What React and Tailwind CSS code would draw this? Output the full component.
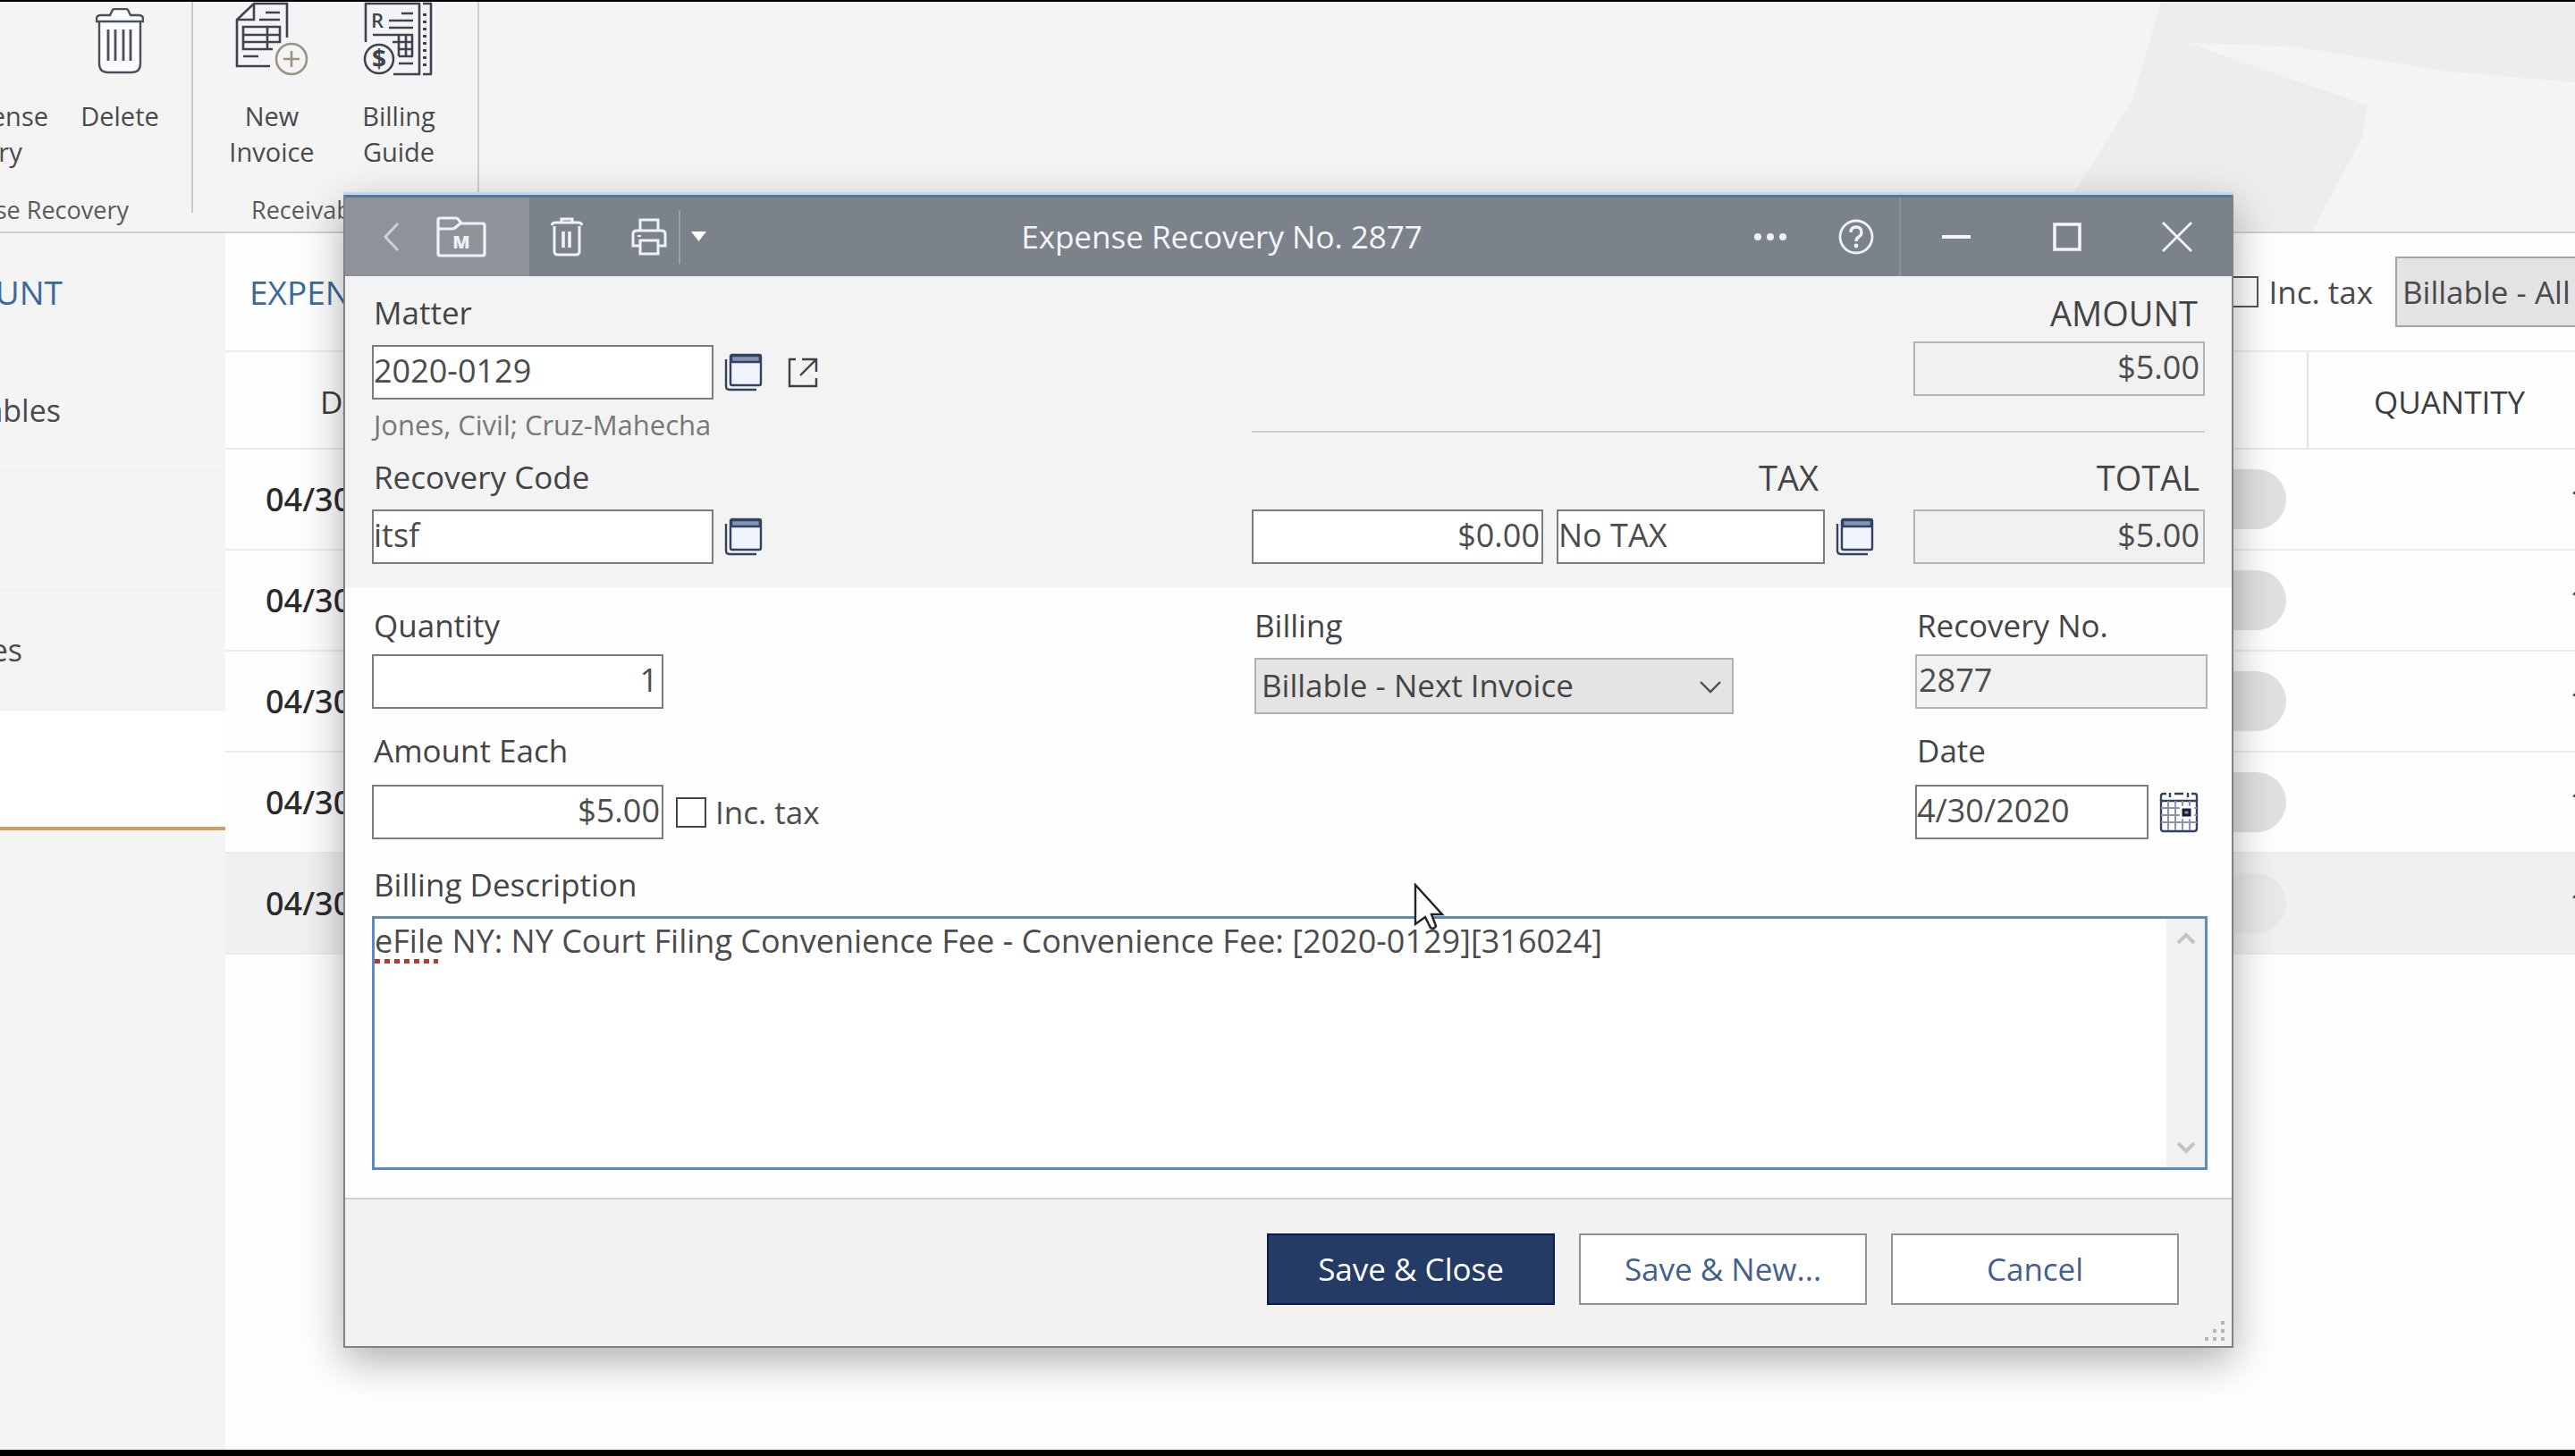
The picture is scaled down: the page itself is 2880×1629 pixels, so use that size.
import { useState } from "react";

// === Ribbon icons ===
function TrashLargeIcon() {
  return (
    <svg width="54" height="74" viewBox="0 0 54 74" fill="#fbfcff" stroke="#4a4f5a" strokeWidth="2.4">
      <path d="M4 15v47q0 10 10 10h26q10 0 10-10V15" />
      <path d="M1 15V12q0-4 5-4h10l3-6q1-1 2-1h13q1 0 2 1l3 6h9q5 0 5 4v3z" />
      <path d="M14 24v35M22 24v35M31 24v35M39 24v35" strokeWidth="2.8" />
    </svg>
  );
}

function NewInvoiceIcon() {
  return (
    <svg width="82" height="84" viewBox="0 0 82 84" fill="none" stroke="#3d4350" strokeWidth="2.6">
      <path d="M39 72H2V20L21 2h37v38" />
      <path d="M21 2v18H2" />
      <path d="M34 12h16M27 20h23M9 61h17" />
      <path d="M9 28h41v17H9zM9 37h41M36 28v25M9 45v8h33" />
      <circle cx="63" cy="64" r="17" stroke="#9b9484" />
      <path d="M54 64h18M63 55v18" stroke="#9b9484" />
    </svg>
  );
}

function BillingGuideIcon() {
  return (
    <svg width="80" height="84" viewBox="0 0 80 84" fill="none" stroke="#3d4350" strokeWidth="2.6">
      <path d="M3 45V2h60v79H34" />
      <path d="M67 2h10M76 2v79M67 81h10" />
      <path d="M69 13v64" strokeDasharray="3 5" strokeWidth="4" />
      <path d="M43 13h13M29 21h27M29 29h27M11 37h45M33 45h23M40 53h16M40 61h16M40 69h16" />
      <path d="M40 37v24M48 37v24M55 37v24" />
      <circle cx="18" cy="64" r="16" />
      <text x="9" y="29" fontFamily="Open Sans, sans-serif" fontSize="22" fontWeight="600" fill="#3d4350" stroke="none">R</text>
      <text x="18" y="74" textAnchor="middle" fontFamily="Open Sans, sans-serif" fontSize="28" fontWeight="700" fill="#3d4350" stroke="none">$</text>
    </svg>
  );
}

// === Title bar icons ===
function BackIcon() {
  return (
    <svg width="20" height="34" viewBox="0 0 20 34" fill="none" stroke="#cdd0d4" strokeWidth="3">
      <path d="M17 2L3 17l14 15" />
    </svg>
  );
}

function MatterFolderIcon() {
  return (
    <svg width="56" height="46" viewBox="0 0 56 46" fill="none" stroke="#eef1f6" strokeWidth="3.2" strokeLinejoin="round">
      <path d="M2 14V4q0-2 2-2h18q2 0 3 2l3 4h24q2 0 2 2v32q0 2-2 2H4q-2 0-2-2z" />
      <path d="M2 14h16q3 0 5-3l4-3" />
      <text x="28" y="36" textAnchor="middle" fontFamily="Open Sans, sans-serif" fontSize="20" fontWeight="800" fill="#eef1f6" stroke="none">M</text>
    </svg>
  );
}

function TrashIcon() {
  return (
    <svg width="36" height="44" viewBox="0 0 36 44" fill="none" stroke="#eef1f6" strokeWidth="3">
      <path d="M4 10v28q0 4 4 4h20q4 0 4-4V10" />
      <path d="M1 9q1-3 4-3h26q3 0 4 3M12 6V2h12v4" />
      <path d="M14 16v18M21 16v18" strokeWidth="3.6" />
    </svg>
  );
}

function PrinterIcon() {
  return (
    <svg width="40" height="42" viewBox="0 0 40 42" fill="none" stroke="#eef1f6" strokeWidth="3">
      <path d="M10 14V2h20v12" />
      <path d="M10 31H2V18q0-4 4-4h28q4 0 4 4v13h-8" />
      <path d="M10 25h20v15H10z" />
      <path d="M7 20h4" strokeWidth="2" />
    </svg>
  );
}

function HelpIcon() {
  return (
    <svg width="40" height="40" viewBox="0 0 40 40" fill="none" stroke="#eef1f6" strokeWidth="2.8">
      <circle cx="20" cy="20" r="18" />
      <path d="M14 15q0-6 6-6t6 6q0 3-3 5t-3 5" strokeWidth="3.4" />
      <circle cx="20" cy="30" r="2.4" fill="#eef1f6" stroke="none" />
    </svg>
  );
}

// === Field icons ===
function LookupIcon() {
  return (
    <svg width="43" height="43" viewBox="0 0 43 43" fill="none" stroke="#33425f" strokeWidth="2.4">
      <path d="M2 7v30q0 4 4 4h30" />
      <rect x="7" y="2" width="34" height="34" rx="2" fill="#eff4fd" />
      <path d="M8 3h32v7H8z" fill="#8494b3" strokeWidth="2.6" />
    </svg>
  );
}

function OpenIcon() {
  return (
    <svg width="34" height="34" viewBox="0 0 34 34" fill="none" stroke="#3c4048" strokeWidth="2.4">
      <path d="M9 2H2v30h30v-9" />
      <path d="M16 2h16v14M32 2L14 20" />
    </svg>
  );
}

function CalendarIcon() {
  return (
    <svg width="44" height="46" viewBox="0 0 44 46" fill="none" stroke="#33425f" strokeWidth="2.4">
      <path d="M2 10V4q0-2 3-2h3M17 2h10M36 2h3q3 0 3 2v6M12 1v5M32 1v5" />
      <path d="M2 10h40v31q0 3-3 3H5q-3 0-3-3z" />
      <path d="M2 18h40M2 26h40M2 34h40M10 10v33M18 10v33M26 10v33M34 10v33" stroke="#8b94aa" strokeWidth="2" />
      <path d="M24 17h14v12H24z" fill="#fff" stroke="#fff" />
      <path d="M27 20h7v6h-7z" fill="#8494b3" stroke="#141d33" strokeWidth="3" />
    </svg>
  );
}

function Chevron({ up = false, color = "#c4c4c6" }) {
  return (
    <svg width="22" height="16" viewBox="0 0 22 16" fill="none" stroke={color} strokeWidth="4">
      <path d={up ? "M2 13l9-9 9 9" : "M2 3l9 9 9-9"} />
    </svg>
  );
}

// === Background window ===
function RibbonButton({ label, className, children }) {
  return (
    <button className={"flex flex-col text-[29px] leading-10 text-[#4a4a4c] " + className}>
      <span className="flex h-[108px] items-start">{children}</span>
      <span className="whitespace-pre-line">{label}</span>
    </button>
  );
}

function Ribbon() {
  return (
    <div className="relative flex h-[259px] shrink-0 overflow-hidden border-b-2 border-[#cfcfcf] bg-[#f4f4f4]">
      <svg className="absolute right-0 top-0" width="580" height="257" viewBox="0 0 580 257" fill="#ededed">
        <path d="M117 0h463v90l-140-12-176-28-117-4 86 30 115 40-6 36-56 105H-8L85 110z" />
      </svg>
      <div className="relative h-[236px] w-[216px] border-r-2 border-[#c9c9c9]">
        <div className="flex items-start">
          <div className="flex w-[54px] justify-end">
            <RibbonButton label={"New Expense\nRecovery"} className="shrink-0 items-center" />
          </div>
          <RibbonButton label="Delete" className="w-[160px] items-center">
            <span className="pt-[7px]"><TrashLargeIcon /></span>
          </RibbonButton>
        </div>
        <div className="absolute left-0 top-[214px] flex w-[144px] justify-end">
          <span className="whitespace-nowrap text-[27px] leading-[38px] text-[#5a5a5c]">Expense Recovery</span>
        </div>
      </div>
      <div className="relative flex w-[320px] flex-col border-r-2 border-[#cfcfcf] px-[17px]">
        <div className="flex">
          <RibbonButton label={"New\nInvoice"} className="w-[142px] items-center"><NewInvoiceIcon /></RibbonButton>
          <RibbonButton label={"Billing\nGuide"} className="w-[142px] items-center"><BillingGuideIcon /></RibbonButton>
        </div>
        <span className="mt-[26px] pl-[48px] text-[27px] leading-[38px] text-[#5a5a5c]">Receivables</span>
      </div>
    </div>
  );
}

function NavItem({ label, width, active }) {
  return (
    <a href="#" className={"flex h-[134px] items-center border-b-2 text-[34px] leading-[46px] text-[#4a4a4c] " + (active ? "border-b-4 border-[#d59b5e] bg-white" : "border-[#efeff1]")}>
      <span className={"flex justify-end whitespace-nowrap " + width}>{label}</span>
    </a>
  );
}

function Sidebar() {
  return (
    <nav className="w-[252px] shrink-0 overflow-hidden bg-[#f4f4f5]">
      <h2 className="flex h-[132px] w-[70px] items-center justify-end text-[37px] leading-[50px] text-[#3a6a9c]">ACCOUNT</h2>
      <NavItem label="Receivables" width="w-[68px]" />
      <NavItem label="" width="w-0" />
      <NavItem label="Expenses" width="w-[25px]" />
      <NavItem label="" width="w-0" active />
    </nav>
  );
}

const ROWS = [1, 2, 3, 4, 5].map(id => ({ id, date: "04/30/2020", quantity: "1.00", selected: id === 5 }));

function ExpenseList() {
  return (
    <main className="min-w-0 flex-1 overflow-hidden bg-[#fefefe]">
      <div className="flex h-[133px] items-center border-b-2 border-[#ebebed] pl-[27px] text-[35px] leading-[48px] text-[#4a4a4c]">
        <h2 className="text-[37px] text-[#3a6a9c]">EXPENSE RECOVERY</h2>
        <label className="ml-auto flex items-center gap-[11px]">
          <input type="checkbox" className="size-[35px] appearance-none border-2 border-[#555] bg-white" />
          Inc. tax
        </label>
        <select aria-label="Billing filter" className="ml-[25px] h-[79px] w-[201px] appearance-none border-2 border-r-0 border-[#a5a5a7] bg-[#e3e3e3] pl-[6px]">
          <option>Billable - All</option>
        </select>
      </div>
      <table className="w-[calc(100%+25px)] table-fixed border-collapse text-[36px] leading-[48px]">
        <thead>
          <tr className="h-[108px] border-b-2 border-[#ebebed] text-[35px] text-[#3c3c3e]">
            <th className="w-[300px] pl-[106px] pt-1 text-left font-normal">DATE</th>
            <th className="border-r-2 border-[#e4e4e6]" />
            <th className="w-[324px] pr-2 pt-1 text-center font-normal">QUANTITY</th>
          </tr>
        </thead>
        <tbody>
          {ROWS.map(r => (
            <tr key={r.id} className={"h-[113px] border-b-2 border-[#ebebed] " + (r.selected ? "bg-[#f0f0f1]" : "")}>
              <td className="pl-[45px] font-['Noto_Sans','Open_Sans',sans-serif] font-medium text-[#2a2a2c]">{r.date}</td>
              <td>
                <span className={"ml-auto mr-[24px] block h-[67px] w-[260px] rounded-full " + (r.selected ? "bg-[#e8e8e9]" : "bg-[#e0e0e1]")} />
              </td>
              <td className="overflow-hidden text-[#4a4a4c]">
                <span className="block whitespace-nowrap pl-[293px]">{r.quantity}</span>
              </td>
            </tr>
          ))}
        </tbody>
      </table>
    </main>
  );
}

// === Dialog ===
function Label({ htmlFor, className = "", total = false, children }) {
  return (
    <label htmlFor={htmlFor} className={"block leading-[48px] text-[#444446] " + (total ? "text-right text-[38px] " : "text-[35px] ") + className}>{children}</label>
  );
}

function Field({ id, value, className = "", readOnly = false }) {
  return (
    <input id={id} defaultValue={value} readOnly={readOnly}
           className={"block h-[61px] border-2 pb-[5px] text-[36px] text-[#4c4c4e] outline-none " + (readOnly ? "border-[#b4b4b6] bg-[#f1f1f1] " : "border-[#7c7c7e] bg-white ") + className} />
  );
}

function TitleBar() {
  return (
    <header className="flex h-[91px] items-stretch border-t-[3px] border-[#557797] bg-[#7c828a] text-white">
      <div className="flex w-[206px] items-center bg-[#8e9399]">
        <button aria-label="Back" className="ml-[42px]"><BackIcon /></button>
        <button aria-label="Matter" className="ml-[40px]"><MatterFolderIcon /></button>
      </div>
      <button aria-label="Delete" className="flex w-[84px] items-center justify-center"><TrashIcon /></button>
      <button aria-label="Print" className="my-[14px] flex w-[85px] items-center justify-center border-r-2 border-[#9a9fa6] pl-[16px]"><PrinterIcon /></button>
      <button aria-label="Print options" className="flex w-[40px] items-center justify-center">
        <svg width="17" height="12" viewBox="0 0 17 12" fill="#fff"><path d="M0 0h17L8.500 11z" /></svg>
      </button>
      <h1 className="flex flex-1 items-center justify-center text-[35px] leading-[48px] text-[#f4f6fa]">Expense Recovery No. 2877</h1>
      <button aria-label="More" className="flex w-[96px] items-center justify-center">
        <svg width="38" height="10" viewBox="0 0 38 10" fill="#eef1f6"><circle cx="5" cy="5" r="4" /><circle cx="19" cy="5" r="4" /><circle cx="33" cy="5" r="4" /></svg>
      </button>
      <button aria-label="Help" className="flex w-[98px] items-center justify-center border-r-2 border-[#8d9299]"><HelpIcon /></button>
      <button aria-label="Minimize" className="flex w-[124px] items-center justify-center">
        <svg width="32" height="4" viewBox="0 0 32 4" fill="#f4f6fa"><path d="M0 0h32v4H0z" /></svg>
      </button>
      <button aria-label="Maximize" className="flex w-[124px] items-center justify-center">
        <svg width="32" height="32" viewBox="0 0 32 32" fill="none" stroke="#f4f6fa" strokeWidth="3.500"><path d="M2 2h28v28H2z" /></svg>
      </button>
      <button aria-label="Close" className="flex w-[122px] items-center justify-center">
        <svg width="34" height="34" viewBox="0 0 34 34" fill="none" stroke="#f4f6fa" strokeWidth="2.800"><path d="M1 1l32 32M33 1L1 33" /></svg>
      </button>
    </header>
  );
}

function SummarySection() {
  return (
    <section className="flex justify-between bg-[#f3f3f3] pb-[26px] pl-[30px] pr-[30px] pt-[17px]">
      <div>
        <Label htmlFor="matter" className="pl-[2px]">Matter</Label>
        <div className="mt-3 flex items-center">
          <Field id="matter" value="2020-0129" className="w-[382px]" />
          <button aria-label="Find matter" className="ml-3"><LookupIcon /></button>
          <button aria-label="Open matter" className="ml-[28px]"><OpenIcon /></button>
        </div>
        <div className="mt-[7px] pl-[2px] text-[31px] leading-[42px] text-[#777779]">Jones, Civil; Cruz-Mahecha</div>
        <Label htmlFor="code" className="mt-[14px] pl-[2px]">Recovery Code</Label>
        <div className="mt-3 flex items-center">
          <Field id="code" value="itsf" className="w-[382px]" />
          <button aria-label="Find recovery code" className="ml-3"><LookupIcon /></button>
        </div>
      </div>
      <div className="flex w-[1066px] flex-col">
        <Label htmlFor="amount" total className="pr-2">AMOUNT</Label>
        <Field id="amount" value="$5.00" readOnly className="ml-auto mt-2 w-[326px] pr-1 text-right" />
        <hr className="mt-[39px] border-t-2 border-[#cfcfcf]" />
        <div className="mt-[26px] flex justify-between">
          <div>
            <Label htmlFor="tax" total className="w-[640px] pr-[6px]">TAX</Label>
            <div className="mt-3 flex items-center">
              <Field id="tax" value="$0.00" className="w-[326px] pr-[2px] text-right" />
              <Field id="taxcode" value="No TAX" className="ml-[15px] w-[300px]" />
              <button aria-label="Find tax code" className="ml-3"><LookupIcon /></button>
            </div>
          </div>
          <div>
            <Label htmlFor="total" total className="pr-[6px]">TOTAL</Label>
            <Field id="total" value="$5.00" readOnly className="mt-3 w-[326px] pr-1 text-right" />
          </div>
        </div>
      </div>
    </section>
  );
}

function DetailSection() {
  const [text, setText] = useState("eFile NY: NY Court Filing Convenience Fee - Convenience Fee: [2020-0129][316024]");
  return (
    <section className="bg-[#fefefe] pb-[31px] pl-[30px] pr-[27px] pt-[19px]">
      <div className="flex">
        <div>
          <Label htmlFor="quantity" className="pl-[2px]">Quantity</Label>
          <Field id="quantity" value="1" className="mt-2 w-[326px] pr-1 text-right" />
          <Label htmlFor="each" className="mt-[23px] pl-[2px]">Amount Each</Label>
          <div className="mt-[14px] flex items-center">
            <Field id="each" value="$5.00" className="w-[326px] pr-[2px] text-right" />
            <label className="ml-[14px] flex items-center gap-[10px] text-[35px] leading-[48px] text-[#4c4c4e]">
              <input type="checkbox" className="size-[34px] appearance-none border-2 border-[#444] bg-white" />
              Inc. tax
            </label>
          </div>
        </div>
        <div className="ml-auto">
          <Label htmlFor="billing">Billing</Label>
          <div className="relative mt-3">
            <select id="billing" className="h-[63px] w-[536px] appearance-none border-2 border-[#b0b0b2] bg-[#e4e4e4] pl-[6px] text-[35px] text-[#444446]">
              <option>Billable - Next Invoice</option>
            </select>
            <svg className="pointer-events-none absolute right-[14px] top-[26px]" width="24" height="14" viewBox="0 0 24 14" fill="none" stroke="#4c4c4e" strokeWidth="2.400"><path d="M1 1l11 11L23 1" /></svg>
          </div>
        </div>
        <div className="ml-[203px] w-[327px]">
          <Label htmlFor="number" className="pl-[2px]">Recovery No.</Label>
          <Field id="number" value="2877" readOnly className="mt-2 w-full pl-[2px]" />
          <Label htmlFor="date" className="mt-[23px] pl-[2px]">Date</Label>
          <div className="mt-[14px] flex items-center gap-3">
            <Field id="date" value="4/30/2020" className="w-[261px]" />
            <button aria-label="Pick a date"><CalendarIcon /></button>
          </div>
        </div>
      </div>
      <Label htmlFor="description" className="mt-[27px] pl-[2px]">Billing Description</Label>
      <div className="relative mt-[11px] flex h-[284px] border-[3px] border-[#5c8cbf] bg-white">
        <textarea id="description" value={text} onChange={e => setText(e.target.value)} spellCheck={false}
                  className="h-full flex-1 resize-none pt-[1px] text-[36px] leading-[48px] text-[#4c4c4e] outline-none" />
        <span className="pointer-events-none absolute left-0 top-[45px] h-[5px] w-[71px] bg-[repeating-linear-gradient(90deg,#b83a2c_0_6px,transparent_6px_11px)]" />
        <div className="flex w-[43px] flex-col items-center justify-between bg-[#f1f1f2] py-[14px]">
          <button aria-label="Scroll up"><Chevron up /></button>
          <button aria-label="Scroll down"><Chevron /></button>
        </div>
      </div>
    </section>
  );
}

function DialogFooter() {
  const base = "h-[80px] w-[322px] border-2 text-[35px] leading-[48px] ";
  return (
    <footer className="relative flex justify-end gap-[27px] border-t-2 border-[#cfcfd1] bg-[#f2f2f3] pb-[46px] pr-[59px] pt-[38px]">
      <button className={base + "border-[#0b1b52] bg-[#243b66] text-white"}>Save &amp; Close</button>
      <button className={base + "border-[#929294] bg-white text-[#44608a]"}>Save &amp; New...</button>
      <button className={base + "border-[#929294] bg-white text-[#44608a]"}>Cancel</button>
      <svg className="absolute bottom-[4px] right-[6px]" width="24" height="24" viewBox="0 0 24 24" fill="#b4b4b6">
        <path d="M18 0h4v4h-4zM18 9h4v4h-4zM18 18h4v4h-4zM9 9h4v4H9zM9 18h4v4H9zM0 18h4v4H0z" />
      </svg>
    </footer>
  );
}

function ExpenseDialog() {
  return (
    <div role="dialog" aria-label="Expense Recovery No. 2877"
         className="absolute left-[384px] right-[382px] top-[216px] border-2 border-t-0 border-[#7e8186] shadow-[0_-3px_0_#c0d9ef,0_14px_44px_rgba(0,0,0,0.32)]">
      <TitleBar />
      <SummarySection />
      <DetailSection />
      <DialogFooter />
    </div>
  );
}

export default function App() {
  return (
    <div className="relative flex min-h-screen flex-col overflow-hidden border-b-[7px] border-t-2 border-black bg-[#fefefe] font-['Open_Sans','Noto_Sans',sans-serif]">
      <Ribbon />
      <div className="flex flex-1">
        <Sidebar />
        <ExpenseList />
      </div>
      <ExpenseDialog />
      <svg className="pointer-events-none absolute left-[1581px] top-[986px]" width="36" height="54" viewBox="0 0 36 54" fill="#fff" stroke="#222" strokeWidth="2.400">
        <path d="M2 2v44l11-8 6 12q4 2 6-2l-5-13h12z" />
      </svg>
    </div>
  );
}
